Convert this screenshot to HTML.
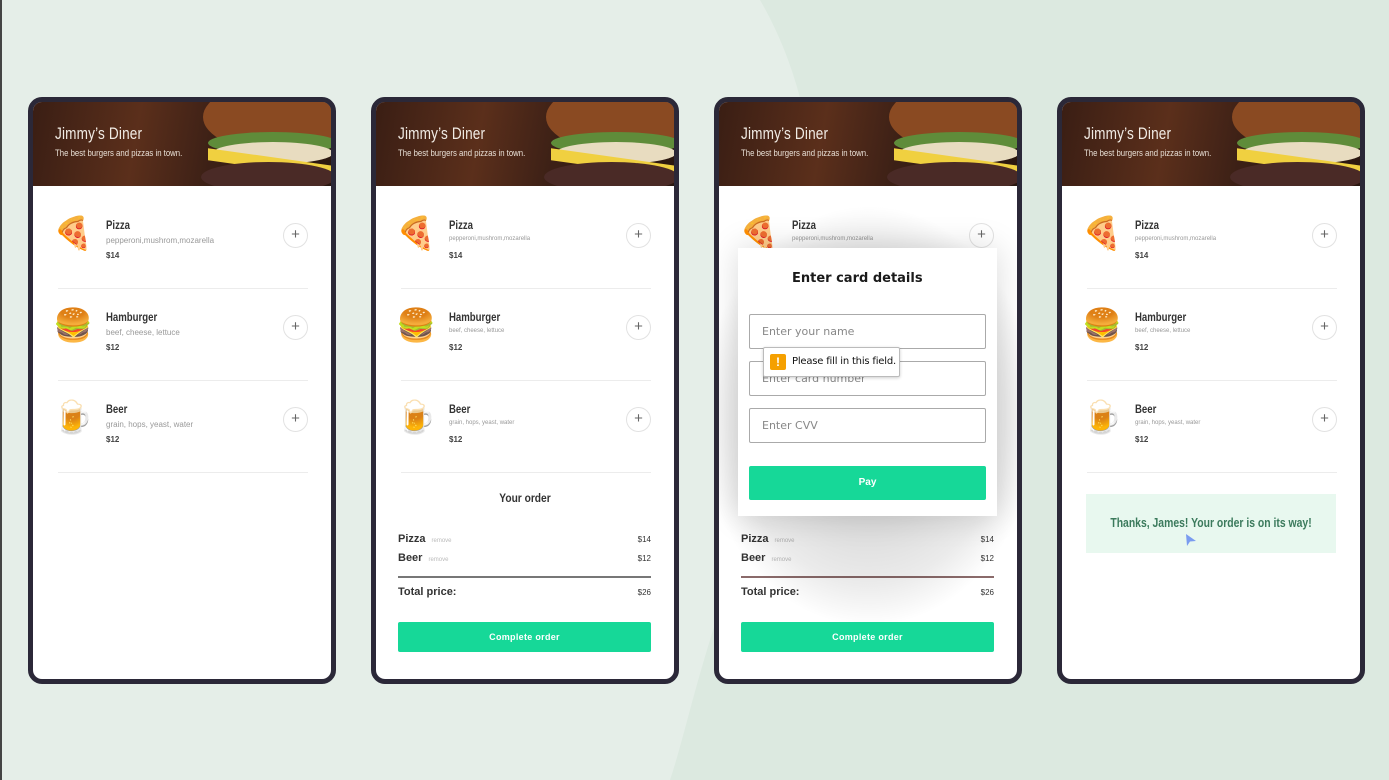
<!DOCTYPE html>
<html><head><meta charset="utf-8"><style>
*{margin:0;padding:0;box-sizing:border-box}
body{width:1389px;height:780px;overflow:hidden;background:#e5eee8;position:relative;font-family:"Liberation Sans",sans-serif}
.bg2{position:absolute;left:0;top:0;width:1389px;height:780px}
.ph{position:absolute;top:97px;width:308px;height:587px;border:5px solid #2b2838;border-radius:14px;background:#fff;overflow:hidden}
.hd{position:absolute;left:0;top:0;width:298px;height:84px;background:linear-gradient(100deg,#3a1e14 0%,#5b2f1b 35%,#3c2016 60%,#2a1710 100%);overflow:hidden}
.hd .t{position:absolute;left:22px;top:22px;color:#f1ebe4;font-size:17px;transform:scaleX(.8);transform-origin:left;letter-spacing:.2px;white-space:nowrap}
.hd .s{position:absolute;left:22px;top:46px;color:#e9e0d6;font-size:9.5px;transform:scaleX(.82);transform-origin:left;white-space:nowrap}
.b{position:absolute;border-radius:50%}
.it{position:absolute;left:0;width:298px;height:92px}
.em{position:absolute;left:20px;top:20px;font-size:32px;line-height:1;font-family:"Noto Color Emoji","DejaVu Sans",sans-serif}
.nm{position:absolute;left:73px;top:21px;font-size:12px;font-weight:bold;color:#333;transform:scaleX(.8);transform-origin:left;white-space:nowrap}
.ds{position:absolute;left:73px;top:39px;font-size:8px;color:#999;white-space:nowrap}
.pr{position:absolute;left:73px;top:54px;font-size:8px;color:#444;font-weight:bold}
.pl{position:absolute;left:250px;top:26px;width:25px;height:25px;border:1px solid #e2e2e2;border-radius:50%;text-align:center;line-height:22px;font-size:15px;color:#666}
.sp{position:absolute;left:25px;top:91px;width:250px;height:1px;background:#ececec}
.yo{position:absolute;left:0;width:298px;text-align:center;font-size:12px;color:#333;font-weight:bold;transform:scaleX(.85)}
.ol{position:absolute;left:22px;width:253px;font-size:11px;color:#333;font-weight:bold}
.ol i{font-style:normal;font-size:6px;color:#bbb;font-weight:normal;margin-left:6px}
.ol b{position:absolute;right:0;top:2px;font-size:8px;font-weight:normal}
.btn{position:absolute;left:22px;top:520px;width:253px;height:30px;background:#16d898;color:#fff;font-size:9px;font-weight:bold;text-align:center;line-height:30px;border-radius:2px;letter-spacing:.3px}
</style></head><body>
<svg class="bg2" viewBox="0 0 1389 780"><path d="M760 0 C830 120 840 300 760 500 C700 650 690 720 670 780 L1389 780 L1389 0 Z" fill="#dce9e0"/><rect x="0" y="0" width="2" height="780" fill="#444"/></svg>

<div class="ph" style="left:28px">
<div class="hd"><div class="b" style="left:170px;top:-20px;width:150px;height:70px;background:#8a4a22"></div><div class="b" style="left:175px;top:30px;width:130px;height:22px;background:#5f8c3a"></div><div class="b" style="left:180px;top:40px;width:120px;height:22px;background:#e8dcc0"></div><div style="position:absolute;left:175px;top:55px;width:125px;height:12px;background:#f0d040;transform:skewY(8deg)"></div><div class="b" style="left:168px;top:60px;width:135px;height:30px;background:#4a2a26"></div><div class="t">Jimmy’s Diner</div><div class="s">The best burgers and pizzas in town.</div></div>
<div class="it" style="top:95px"><div class="em">🍕</div><div class="nm">Pizza</div><div class="ds">pepperoni,mushrom,mozarella</div><div class="pr">$14</div><div class="pl">+</div><div class="sp"></div></div>
<div class="it" style="top:187px"><div class="em">🍔</div><div class="nm">Hamburger</div><div class="ds">beef, cheese, lettuce</div><div class="pr">$12</div><div class="pl">+</div><div class="sp"></div></div>
<div class="it" style="top:279px"><div class="em">🍺</div><div class="nm">Beer</div><div class="ds">grain, hops, yeast, water</div><div class="pr">$12</div><div class="pl">+</div><div class="sp"></div></div>
</div>

<div class="ph" style="left:371px">
<div class="hd"><div class="b" style="left:170px;top:-20px;width:150px;height:70px;background:#8a4a22"></div><div class="b" style="left:175px;top:30px;width:130px;height:22px;background:#5f8c3a"></div><div class="b" style="left:180px;top:40px;width:120px;height:22px;background:#e8dcc0"></div><div style="position:absolute;left:175px;top:55px;width:125px;height:12px;background:#f0d040;transform:skewY(8deg)"></div><div class="b" style="left:168px;top:60px;width:135px;height:30px;background:#4a2a26"></div><div class="t">Jimmy’s Diner</div><div class="s">The best burgers and pizzas in town.</div></div>
<div class="it" style="top:95px"><div class="em">🍕</div><div class="nm">Pizza</div><div class="ds" style="font-size:6px">pepperoni,mushrom,mozarella</div><div class="pr">$14</div><div class="pl">+</div><div class="sp"></div></div>
<div class="it" style="top:187px"><div class="em">🍔</div><div class="nm">Hamburger</div><div class="ds" style="font-size:6px">beef, cheese, lettuce</div><div class="pr">$12</div><div class="pl">+</div><div class="sp"></div></div>
<div class="it" style="top:279px"><div class="em">🍺</div><div class="nm">Beer</div><div class="ds" style="font-size:6px">grain, hops, yeast, water</div><div class="pr">$12</div><div class="pl">+</div><div class="sp"></div></div>
<div class="yo" style="top:389px">Your order</div>
<div class="ol" style="top:431px">Pizza<i>remove</i><b>$14</b></div>
<div class="ol" style="top:450px">Beer<i>remove</i><b>$12</b></div>
<div style="position:absolute;left:22px;top:474px;width:253px;height:2px;background:#777"></div>
<div class="ol" style="top:484px">Total price:<b>$26</b></div>
<div class="btn">Complete order</div>
</div>

<div class="ph" style="left:714px">
<div class="hd"><div class="b" style="left:170px;top:-20px;width:150px;height:70px;background:#8a4a22"></div><div class="b" style="left:175px;top:30px;width:130px;height:22px;background:#5f8c3a"></div><div class="b" style="left:180px;top:40px;width:120px;height:22px;background:#e8dcc0"></div><div style="position:absolute;left:175px;top:55px;width:125px;height:12px;background:#f0d040;transform:skewY(8deg)"></div><div class="b" style="left:168px;top:60px;width:135px;height:30px;background:#4a2a26"></div><div class="t">Jimmy’s Diner</div><div class="s">The best burgers and pizzas in town.</div></div>
<div class="it" style="top:95px"><div class="em">🍕</div><div class="nm">Pizza</div><div class="ds" style="font-size:6px">pepperoni,mushrom,mozarella</div><div class="pl">+</div></div>
<div class="ol" style="top:431px">Pizza<i>remove</i><b>$14</b></div>
<div class="ol" style="top:450px">Beer<i>remove</i><b>$12</b></div>
<div style="position:absolute;left:22px;top:474px;width:253px;height:2px;background:#8a6a6a"></div>
<div class="ol" style="top:484px">Total price:<b>$26</b></div>
<div class="btn">Complete order</div>
<div style="position:absolute;left:0;top:84px;width:298px;height:500px;background:radial-gradient(ellipse 170px 210px at 150px 230px,rgba(0,0,0,.25),rgba(0,0,0,.08) 80%,rgba(0,0,0,0))"></div>
<div style="position:absolute;left:19px;top:146px;width:259px;height:268px;background:#fff;box-shadow:0 0 30px rgba(0,0,0,.15)">
<div style="position:absolute;left:54px;top:23px;font-size:13px;font-weight:bold;color:#1a1a1a;font-family:'DejaVu Sans',sans-serif">Enter card details</div>
<div style="position:absolute;left:11px;top:66px;width:237px;height:35px;border:1px solid #aaa;border-radius:2px;font-size:11px;color:#888;padding:10px 12px;font-family:'DejaVu Sans',sans-serif">Enter your name</div>
<div style="position:absolute;left:11px;top:113px;width:237px;height:35px;border:1px solid #aaa;border-radius:2px;font-size:11px;color:#888;padding:10px 12px;font-family:'DejaVu Sans',sans-serif">Enter card number</div>
<div style="position:absolute;left:11px;top:160px;width:237px;height:35px;border:1px solid #aaa;border-radius:2px;font-size:11px;color:#888;padding:10px 12px;font-family:'DejaVu Sans',sans-serif">Enter CVV</div>
<div style="position:absolute;left:11px;top:218px;width:237px;height:34px;background:#16d898;color:#fff;font-size:10px;font-weight:bold;text-align:center;line-height:34px;border-radius:2px">Pay</div>
<div style="position:absolute;left:25px;top:99px;width:137px;height:30px;background:#fff;border:1px solid #bbb;border-radius:2px;box-shadow:0 1px 3px rgba(0,0,0,.2)">
<div style="position:absolute;left:6px;top:6px;width:16px;height:16px;background:#f5a000;border-radius:2px;color:#fff;font-size:12px;font-weight:bold;text-align:center;line-height:16px">!</div>
<div style="position:absolute;left:28px;top:8px;font-size:10px;color:#111;font-family:'DejaVu Sans',sans-serif;letter-spacing:-.2px;white-space:nowrap">Please fill in this field.</div></div>
</div>
</div>

<div class="ph" style="left:1057px">
<div class="hd"><div class="b" style="left:170px;top:-20px;width:150px;height:70px;background:#8a4a22"></div><div class="b" style="left:175px;top:30px;width:130px;height:22px;background:#5f8c3a"></div><div class="b" style="left:180px;top:40px;width:120px;height:22px;background:#e8dcc0"></div><div style="position:absolute;left:175px;top:55px;width:125px;height:12px;background:#f0d040;transform:skewY(8deg)"></div><div class="b" style="left:168px;top:60px;width:135px;height:30px;background:#4a2a26"></div><div class="t">Jimmy’s Diner</div><div class="s">The best burgers and pizzas in town.</div></div>
<div class="it" style="top:95px"><div class="em">🍕</div><div class="nm">Pizza</div><div class="ds" style="font-size:6px">pepperoni,mushrom,mozarella</div><div class="pr">$14</div><div class="pl">+</div><div class="sp"></div></div>
<div class="it" style="top:187px"><div class="em">🍔</div><div class="nm">Hamburger</div><div class="ds" style="font-size:6px">beef, cheese, lettuce</div><div class="pr">$12</div><div class="pl">+</div><div class="sp"></div></div>
<div class="it" style="top:279px"><div class="em">🍺</div><div class="nm">Beer</div><div class="ds" style="font-size:6px">grain, hops, yeast, water</div><div class="pr">$12</div><div class="pl">+</div><div class="sp"></div></div>
<div style="position:absolute;left:24px;top:392px;width:250px;height:59px;background:#e8f8ef">
<div style="position:absolute;left:-30px;top:21px;width:310px;text-align:center;font-size:13px;color:#3b7a5c;font-weight:bold;transform:scaleX(.8);white-space:nowrap">Thanks, James! Your order is on its way!</div>
<svg style="position:absolute;left:99px;top:39px" width="12" height="14" viewBox="0 0 12 14"><path d="M1 1 L11 8 L5 8.5 L2 13 Z" fill="#7a9cf0"/></svg></div>
</div>
</body></html>
